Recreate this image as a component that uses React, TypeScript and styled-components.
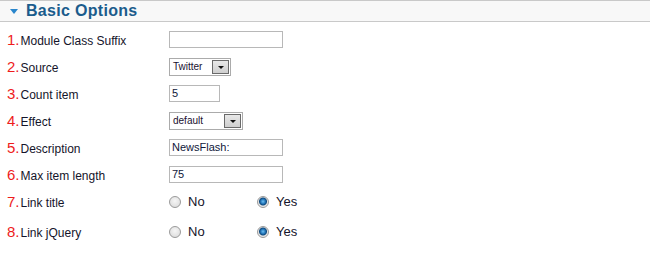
import styled, { createGlobalStyle } from "styled-components";

const GlobalStyle = createGlobalStyle`
  body {
    margin: 0;
    background: #ffffff;
    font-family: "Liberation Sans", Arial, sans-serif;
  }
`;

type Field =
  | { kind: "text"; label: string; value: string; width: number }
  | { kind: "select"; label: string; value: string; width: number }
  | { kind: "radio"; label: string; checked: "no" | "yes" };

const fields: Field[] = [
  { kind: "text", label: "Module Class Suffix", value: "", width: 114 },
  { kind: "select", label: "Source", value: "Twitter", width: 62 },
  { kind: "text", label: "Count item", value: "5", width: 51 },
  { kind: "select", label: "Effect", value: "default", width: 74 },
  { kind: "text", label: "Description", value: "NewsFlash:", width: 114 },
  { kind: "text", label: "Max item length", value: "75", width: 114 },
  { kind: "radio", label: "Link title", checked: "yes" },
  { kind: "radio", label: "Link jQuery", checked: "yes" },
];

export default function App() {
  return (
    <>
      <GlobalStyle />
      <Panel>
        <Header>
          <Arrow />
          <Title>Basic Options</Title>
        </Header>
        <Form>
          {fields.map((f, i) => (
            <Row key={f.label} $gap={i === 7 ? 3 : 0}>
              <LabelCell>
                <Num>{i + 1}.</Num>
                <Label>{f.label}</Label>
              </LabelCell>
              {f.kind === "text" && <TextBox $w={f.width}>{f.value}</TextBox>}
              {f.kind === "select" && (
                <Select $w={f.width}>
                  <SelectValue>{f.value}</SelectValue>
                  <SelectButton>
                    <Caret />
                  </SelectButton>
                </Select>
              )}
              {f.kind === "radio" && (
                <Radios>
                  <RadioOption>
                    <Radio $on={f.checked === "no"} />
                    <RadioText>No</RadioText>
                  </RadioOption>
                  <RadioOption>
                    <Radio $on={f.checked === "yes"} />
                    <RadioText>Yes</RadioText>
                  </RadioOption>
                </Radios>
              )}
            </Row>
          ))}
        </Form>
      </Panel>
    </>
  );
}

const Panel = styled.div`
  width: 650px;
  height: 276px;
  background: #ffffff;
`;

const Header = styled.div`
  height: 20px;
  border-top: 1px solid #c9c9c9;
  border-bottom: 1px solid #c9c9c9;
  background: #f8f8f8;
  display: flex;
  align-items: center;
  padding-left: 10px;
`;

const Arrow = styled.span`
  width: 0;
  height: 0;
  border-left: 4px solid transparent;
  border-right: 4px solid transparent;
  border-top: 5px solid #2a86cc;
  margin-right: 8px;
  margin-top: 1px;
`;

const Title = styled.span`
  font-size: 16px;
  font-weight: bold;
  color: #1b5c8c;
  letter-spacing: 0.3px;
`;

const Form = styled.div`
  padding-top: 4px;
  display: flex;
  flex-direction: column;
`;

const Row = styled.div<{ $gap: number }>`
  height: 27px;
  margin-top: ${(p) => p.$gap}px;
  display: flex;
  align-items: center;
`;

const LabelCell = styled.div`
  width: 162px;
  padding-left: 7px;
  display: flex;
  align-items: baseline;
`;

const Num = styled.span`
  font-size: 15px;
  color: #ee1c1c;
  margin-right: 1px;
`;

const Label = styled.span`
  font-size: 12px;
  color: #14142a;
`;

const TextBox = styled.div<{ $w: number }>`
  box-sizing: border-box;
  width: ${(p) => p.$w}px;
  height: 17px;
  border: 1px solid #b8b8b8;
  background: #fff;
  font-size: 11px;
  line-height: 15px;
  padding-left: 2px;
  color: #10183a;
`;

const Select = styled.div<{ $w: number }>`
  box-sizing: border-box;
  width: ${(p) => p.$w}px;
  height: 18px;
  border: 1px solid #ababab;
  background: #fff;
  display: flex;
  align-items: center;
  justify-content: space-between;
  padding: 0 1px 0 3px;
`;

const SelectValue = styled.span`
  font-size: 10px;
  color: #1a1030;
`;

const SelectButton = styled.span`
  box-sizing: border-box;
  width: 17px;
  height: 14px;
  border: 1px solid #6a6a6a;
  background: linear-gradient(#e8e8e8, #cfcfcf);
  display: flex;
  align-items: center;
  justify-content: center;
`;

const Caret = styled.span`
  width: 0;
  height: 0;
  border-left: 3px solid transparent;
  border-right: 3px solid transparent;
  border-top: 3px solid #111;
  margin-top: 2px;
`;

const Radios = styled.div`
  display: flex;
`;

const RadioOption = styled.div`
  width: 88px;
  display: flex;
  align-items: center;
`;

const Radio = styled.span<{ $on: boolean }>`
  box-sizing: border-box;
  width: 12px;
  height: 12px;
  border-radius: 50%;
  border: 1px solid #9a9a9a;
  background: ${(p) =>
    p.$on
      ? "radial-gradient(circle at 50% 45%, #6fc0f0 0, #2b80c4 2px, #0f4b80 3.5px, #e4e4e4 4.5px, #f4f4f4 100%)"
      : "radial-gradient(circle at 50% 40%, #f6f6f6 0, #d8d8d8 100%)"};
  margin-right: 7px;
`;

const RadioText = styled.span`
  font-size: 13px;
  color: #14142a;
`;
